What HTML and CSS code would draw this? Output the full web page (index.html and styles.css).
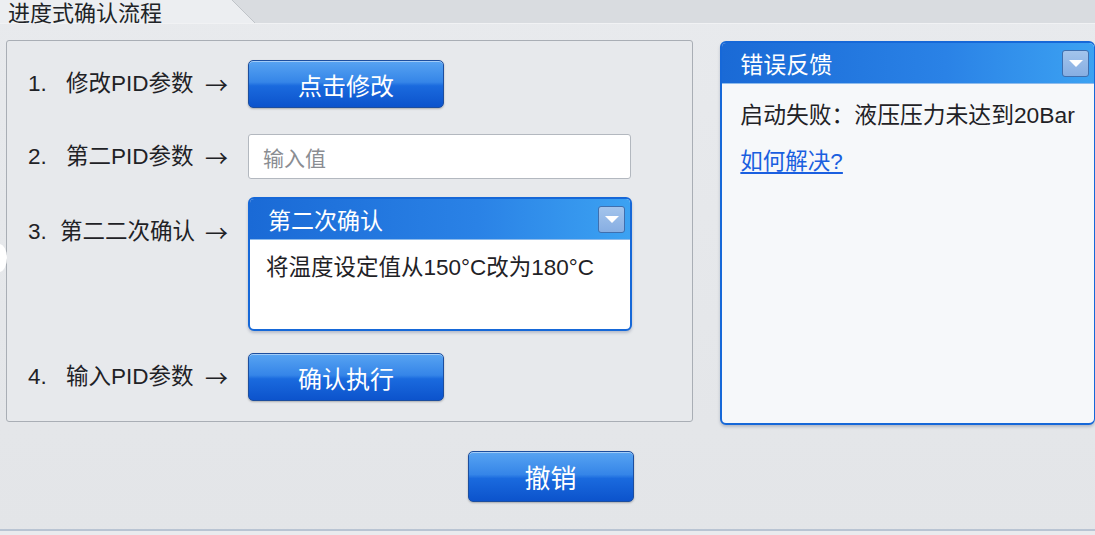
FILE: index.html
```html
<!DOCTYPE html>
<html lang="zh-CN">
<head>
    <meta charset="UTF-8">
    <title>进度式确认流程</title>
    <link rel="stylesheet" href="styles.css">
</head>
<body>
    <div class="tab-bar">
        <div class="tab">
            <span class="tab-title">进度式确认流程</span>
            <svg class="tab-edge" width="26" height="24" viewBox="0 0 26 24"><line x1="1" y1="0" x2="24" y2="23" stroke="#9ea3aa" stroke-width="1"/></svg>
        </div>
    </div>

    <span class="edge-dot"></span>

    <main class="content">
        <section class="steps">
            <div class="step">
                <div class="step-label"><span class="num">1.</span>修改PID参数</div>
                <span class="arrow">→</span>
                <button class="btn">点击修改</button>
            </div>
            <div class="step step-input">
                <div class="step-label"><span class="num">2.</span>第二PID参数</div>
                <span class="arrow">→</span>
                <input class="text-input" type="text" placeholder="输入值">
            </div>
            <div class="step step-top">
                <div class="step-label"><span class="num num-tight">3.</span>第二二次确认</div>
                <span class="arrow">→</span>
                <div class="panel panel-confirm">
                    <div class="panel-head">
                        <span>第二次确认</span>
                        <span class="drop"></span>
                    </div>
                    <div class="panel-body">将温度设定值从150°C改为180°C</div>
                </div>
            </div>
            <div class="step">
                <div class="step-label"><span class="num">4.</span>输入PID参数</div>
                <span class="arrow">→</span>
                <button class="btn">确认执行</button>
            </div>
        </section>

        <aside class="panel panel-error">
            <div class="panel-head">
                <span>错误反馈</span>
                <span class="drop"></span>
            </div>
            <div class="panel-body">
                <p class="error-text">启动失败：液压压力未达到20Bar</p>
                <a class="help-link" href="#">如何解决?</a>
            </div>
        </aside>
    </main>

    <div class="actions">
        <button class="btn btn-undo">撤销</button>
    </div>

    <footer class="bottom-line"></footer>
</body>
</html>
```

FILE: styles.css
```css
:root {
    --text: #1f2226;
    --blue: #1668d8;
    --blue-dark: #1450a8;
    --page: #e5e7ea;
}

body {
    margin: 0;
    width: 1095px;
    height: 535px;
    overflow: hidden;
    font-family: "Liberation Sans", "Noto Sans CJK SC", sans-serif;
    color: var(--text);
    background: linear-gradient(180deg, #e8eaed 0%, #e3e5e8 100%);
    position: relative;
}

/* top tab strip */
.tab-bar {
    height: 23px;
    background: #d9dce0;
    border-bottom: 1px solid #f1f2f4;
    display: flex;
}

.tab {
    position: relative;
    width: 256px;
    height: 23px;
    background: #eceef1;
    clip-path: polygon(0 0, 232px 0, 256px 24px, 0 24px);
}

.tab-title {
    display: block;
    padding-left: 8px;
    font-size: 22px;
    line-height: 28px;
    color: #202326;
    white-space: nowrap;
}

.tab-edge {
    position: absolute;
    left: 231px;
    top: 0;
}

.edge-dot {
    position: absolute;
    left: -9px;
    top: 244px;
    width: 16px;
    height: 28px;
    border-radius: 50%;
    background: #ffffff;
}

.content {
    display: flex;
    align-items: flex-start;
    padding: 16px 0 0 6px;
    gap: 27px;
}

/* left step list */
.steps {
    width: 686px;
    height: 341px;
    border: 1px solid #a9aeb5;
    border-radius: 3px;
    background: #e7e9ec;
    padding: 19px 0 20px;
    display: flex;
    flex-direction: column;
    gap: 22px;
}

.step {
    display: flex;
    align-items: center;
    padding-left: 21px;
}

.step-input {
    margin-top: 4px;
}

.step-top {
    align-items: flex-start;
    margin-top: -4px;
}

.step-top .step-label,
.step-top .arrow {
    margin-top: 22px;
}

.step-label {
    width: 177px;
    display: flex;
    font-size: 22.5px;
    line-height: 26px;
    white-space: nowrap;
}

.num {
    width: 38px;
}

.num-tight {
    width: 32px;
}

.arrow {
    width: 43px;
    font-size: 23px;
    line-height: 26px;
    font-family: "Noto Sans CJK SC", sans-serif;
}

.btn {
    width: 196px;
    height: 48px;
    border: 1px solid #1d4e9e;
    border-radius: 5px;
    background: linear-gradient(180deg, #58a4f2 0%, #3585e8 46%, #1a6ade 54%, #0c53cc 100%);
    box-shadow: inset 0 1px 0 rgba(255, 255, 255, 0.45), 0 1px 2px rgba(0, 0, 0, 0.25);
    color: #ffffff;
    font-family: "Noto Sans CJK SC", sans-serif;
    font-size: 24px;
    padding: 0;
    cursor: pointer;
}

.text-input {
    box-sizing: border-box;
    width: 383px;
    height: 45px;
    border: 1px solid #b3b8bf;
    border-radius: 3px;
    background: #ffffff;
    padding: 0 14px;
    font-family: "Noto Sans CJK SC", sans-serif;
    font-size: 21px;
    color: var(--text);
}

.text-input::placeholder {
    color: #8a8d92;
}

/* blue titled panels */
.panel {
    box-sizing: border-box;
    border: 2px solid var(--blue);
    border-radius: 6px;
    background: #ffffff;
    overflow: hidden;
    box-shadow: 0 2px 3px rgba(40, 60, 100, 0.25);
}

.panel-head {
    height: 40px;
    display: flex;
    align-items: center;
    justify-content: space-between;
    padding: 0 5px 0 18px;
    background: linear-gradient(90deg, #1a6ad6 0%, #2a82e6 60%, #3ca2f2 100%);
    border-bottom: 1px solid #8fbcec;
    color: #ffffff;
    font-family: "Noto Sans CJK SC", sans-serif;
    font-size: 23px;
}

.drop {
    position: relative;
    width: 25px;
    height: 25px;
    border: 1px solid #3f6fae;
    border-radius: 3px;
    background: linear-gradient(180deg, #a3c4ec 0%, #87aee2 100%);
}

.drop::after {
    content: "";
    position: absolute;
    left: 6px;
    top: 9px;
    border-left: 7px solid transparent;
    border-right: 7px solid transparent;
    border-top: 7px solid #ffffff;
}

.panel-confirm {
    width: 384px;
    height: 134px;
}

.panel-confirm .panel-body {
    padding: 13px 16px;
    font-size: 22.5px;
    line-height: 30px;
}

.panel-error {
    width: 375px;
    height: 384px;
    margin-top: 1px;
    border-right-width: 1px;
    background: #f6f8fa;
}

.panel-error .panel-body {
    padding: 16px 18px;
}

.error-text {
    margin: 0 0 17px;
    font-size: 22.8px;
    line-height: 30px;
    white-space: nowrap;
}

.help-link {
    font-size: 22.5px;
    line-height: 30px;
    color: #1a5fe0;
    text-decoration: underline;
    text-underline-offset: 3px;
}

.actions {
    display: flex;
    justify-content: center;
    padding: 26px 0 0 6px;
}

.btn-undo {
    width: 166px;
    height: 51px;
    font-size: 26px;
}

.bottom-line {
    position: absolute;
    left: 0;
    right: 0;
    bottom: 0;
    height: 4px;
    border-top: 2px solid #b9c4d3;
    background: #e9ebee;
}
```
